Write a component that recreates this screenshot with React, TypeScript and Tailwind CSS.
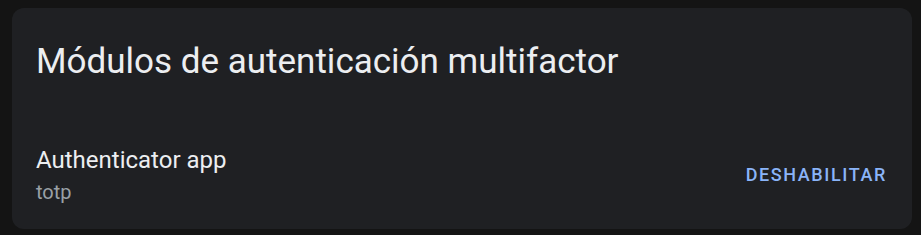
export default function App() {
  return (
    <div className="min-h-screen w-full bg-[#141414] pt-2 pl-3" style={{ fontFamily: 'Roboto, "Noto Sans", sans-serif' }}>
      <div className="w-[900px] h-[221px] rounded-xl bg-[#1f2023] px-6 pt-[34px]">
        <h1 className="text-[35px] leading-[40px] text-[#eceef1] font-normal">Módulos de autenticación multifactor</h1>
        <div className="mt-[64px] flex items-center justify-between">
          <div className="flex flex-col">
            <span className="text-[24px] leading-[28px] text-[#eceef1]">Authenticator app</span>
            <span className="text-[20px] leading-[24px] text-[#9aa0a6] mt-[6px]">totp</span>
          </div>
          <button className="mr-[1px] text-[18px] leading-[22px] font-medium tracking-[1.6px] text-[#8ab4f8] uppercase">Deshabilitar</button>
        </div>
      </div>
    </div>
  );
}
